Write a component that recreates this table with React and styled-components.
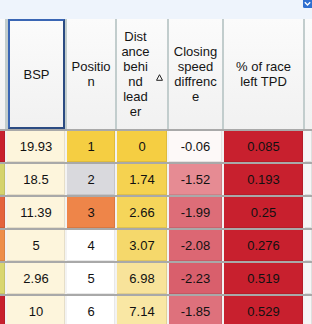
import React from 'react';
import styled, { createGlobalStyle } from 'styled-components';

const Global = createGlobalStyle`
  html, body {
    margin: 0;
    padding: 0;
    background: #ffffff;
  }
  body {
    font-family: "Liberation Sans", Arial, sans-serif;
  }
`;

const COLS = '5px 58px 48px 50px 53px 79px 1fr';

const Page = styled.div`
  width: 312px;
  height: 324px;
  overflow: hidden;
  background: #ffffff;
  display: flex;
  flex-direction: column;
`;

const TopBar = styled.div`
  height: 19px;
  flex: none;
  background: #eef4fc;
  display: flex;
  justify-content: flex-end;
  align-items: flex-start;
`;

const Header = styled.div`
  height: 110px;
  flex: none;
  display: grid;
  grid-template-columns: ${COLS};
  column-gap: 2px;
  background: #c2cdcd;
`;

const HeadCell = styled.div`
  box-sizing: border-box;
  background: linear-gradient(#fbfbfb, #f1f1f1);
  display: flex;
  align-items: center;
  justify-content: center;
  text-align: center;
  font-size: 13px;
  line-height: 15px;
  color: #151515;
  border: ${(p) => (p.$focused ? '2px solid #3a66b4' : 'none')};
  border-right-color: ${(p) => (p.$focused ? '#2b4b82' : 'transparent')};
  border-bottom-color: ${(p) => (p.$focused ? '#2b4b82' : 'transparent')};
  margin-left: ${(p) => (p.$focused ? '1px' : '0')};
  gap: ${(p) => (p.$sorted ? '6px' : '0')};
`;

const Lines = styled.div`
  display: flex;
  flex-direction: column;
  align-items: center;
`;

const SortGlyph = styled.svg`
  width: 7px;
  height: 7px;
  flex: none;
  margin-top: 6px;
`;

const Body = styled.div`
  display: flex;
  flex-direction: column;
  gap: 2px;
  padding-top: 2px;
  background: #a9a9a9;
`;

const Row = styled.div`
  height: 31px;
  flex: none;
  display: grid;
  grid-template-columns: ${COLS};
  column-gap: 2px;
  background: #f3f3f3;
`;

const Cell = styled.div`
  background: ${(p) => p.$bg};
  box-shadow: inset -1px -1px 0 rgba(0, 0, 0, 0.09);
  display: flex;
  align-items: center;
  justify-content: center;
  font-size: 13px;
  color: #111111;
`;

const Check = () => (
  <svg width="9" height="8" viewBox="0 0 9 8">
    <rect x="0" y="-3" width="12" height="11" rx="1.5" fill="#2f6fd0" />
    <path d="M1.8 2.2 L4.5 4.9 L7.2 2.2" fill="none" stroke="#ffffff" strokeWidth="1.4" />
  </svg>
);

const rows = [
  { edge: '#c8202e', bsp: '19.93', pos: '1', posBg: '#f5ce42', dist: '0', distBg: '#f5ce42', close: '-0.06', closeBg: '#fdf9f8', pct: '0.085' },
  { edge: '#d5d36d', bsp: '18.5', pos: '2', posBg: '#d9d9dd', dist: '1.74', distBg: '#f5d250', close: '-1.52', closeBg: '#e68b93', pct: '0.193' },
  { edge: '#e4633d', bsp: '11.39', pos: '3', posBg: '#ee8549', dist: '2.66', distBg: '#f5d55a', close: '-1.99', closeBg: '#dd6d78', pct: '0.25' },
  { edge: '#ee8e4a', bsp: '5', pos: '4', posBg: '#ffffff', dist: '3.07', distBg: '#f5d86b', close: '-2.08', closeBg: '#dc6773', pct: '0.276' },
  { edge: '#d9d670', bsp: '2.96', pos: '5', posBg: '#ffffff', dist: '6.98', distBg: '#f8e39a', close: '-2.23', closeBg: '#d95f6c', pct: '0.519' },
  { edge: '#c8202e', bsp: '10', pos: '6', posBg: '#ffffff', dist: '7.14', distBg: '#f9e7a4', close: '-1.85', closeBg: '#de717c', pct: '0.529' },
];

const heads = [
  ['Positio', 'n'],
  ['Dist', 'ance', 'behi', 'nd', 'lead', 'er'],
  ['Closing', 'speed', 'diffrenc', 'e'],
  ['% of race', 'left TPD'],
];

function App() {
  return (
    <Page>
      <Global />
      <TopBar>
        <Check />
      </TopBar>
      <Header>
        <HeadCell />
        <HeadCell $focused>BSP</HeadCell>
        {heads.map((lines, i) => (
          <HeadCell key={i} $sorted={i === 1}>
            <Lines>
              {lines.map((l) => (
                <span key={l}>{l}</span>
              ))}
            </Lines>
            {i === 1 && (
              <SortGlyph viewBox="0 0 7 7">
                <path d="M3.5 0.7 L6.5 6.3 L0.5 6.3 Z" fill="none" stroke="#222" strokeWidth="1" />
              </SortGlyph>
            )}
          </HeadCell>
        ))}
        <HeadCell />
      </Header>
      <Body>
        {rows.map((r) => (
          <Row key={r.pos}>
            <Cell $bg={r.edge} />
            <Cell $bg="#fdf5dc">{r.bsp}</Cell>
            <Cell $bg={r.posBg}>{r.pos}</Cell>
            <Cell $bg={r.distBg}>{r.dist}</Cell>
            <Cell $bg={r.closeBg}>{r.close}</Cell>
            <Cell $bg="#c8202e">{r.pct}</Cell>
            <Cell $bg="#f6f6f6" />
          </Row>
        ))}
      </Body>
    </Page>
  );
}

export default App;
